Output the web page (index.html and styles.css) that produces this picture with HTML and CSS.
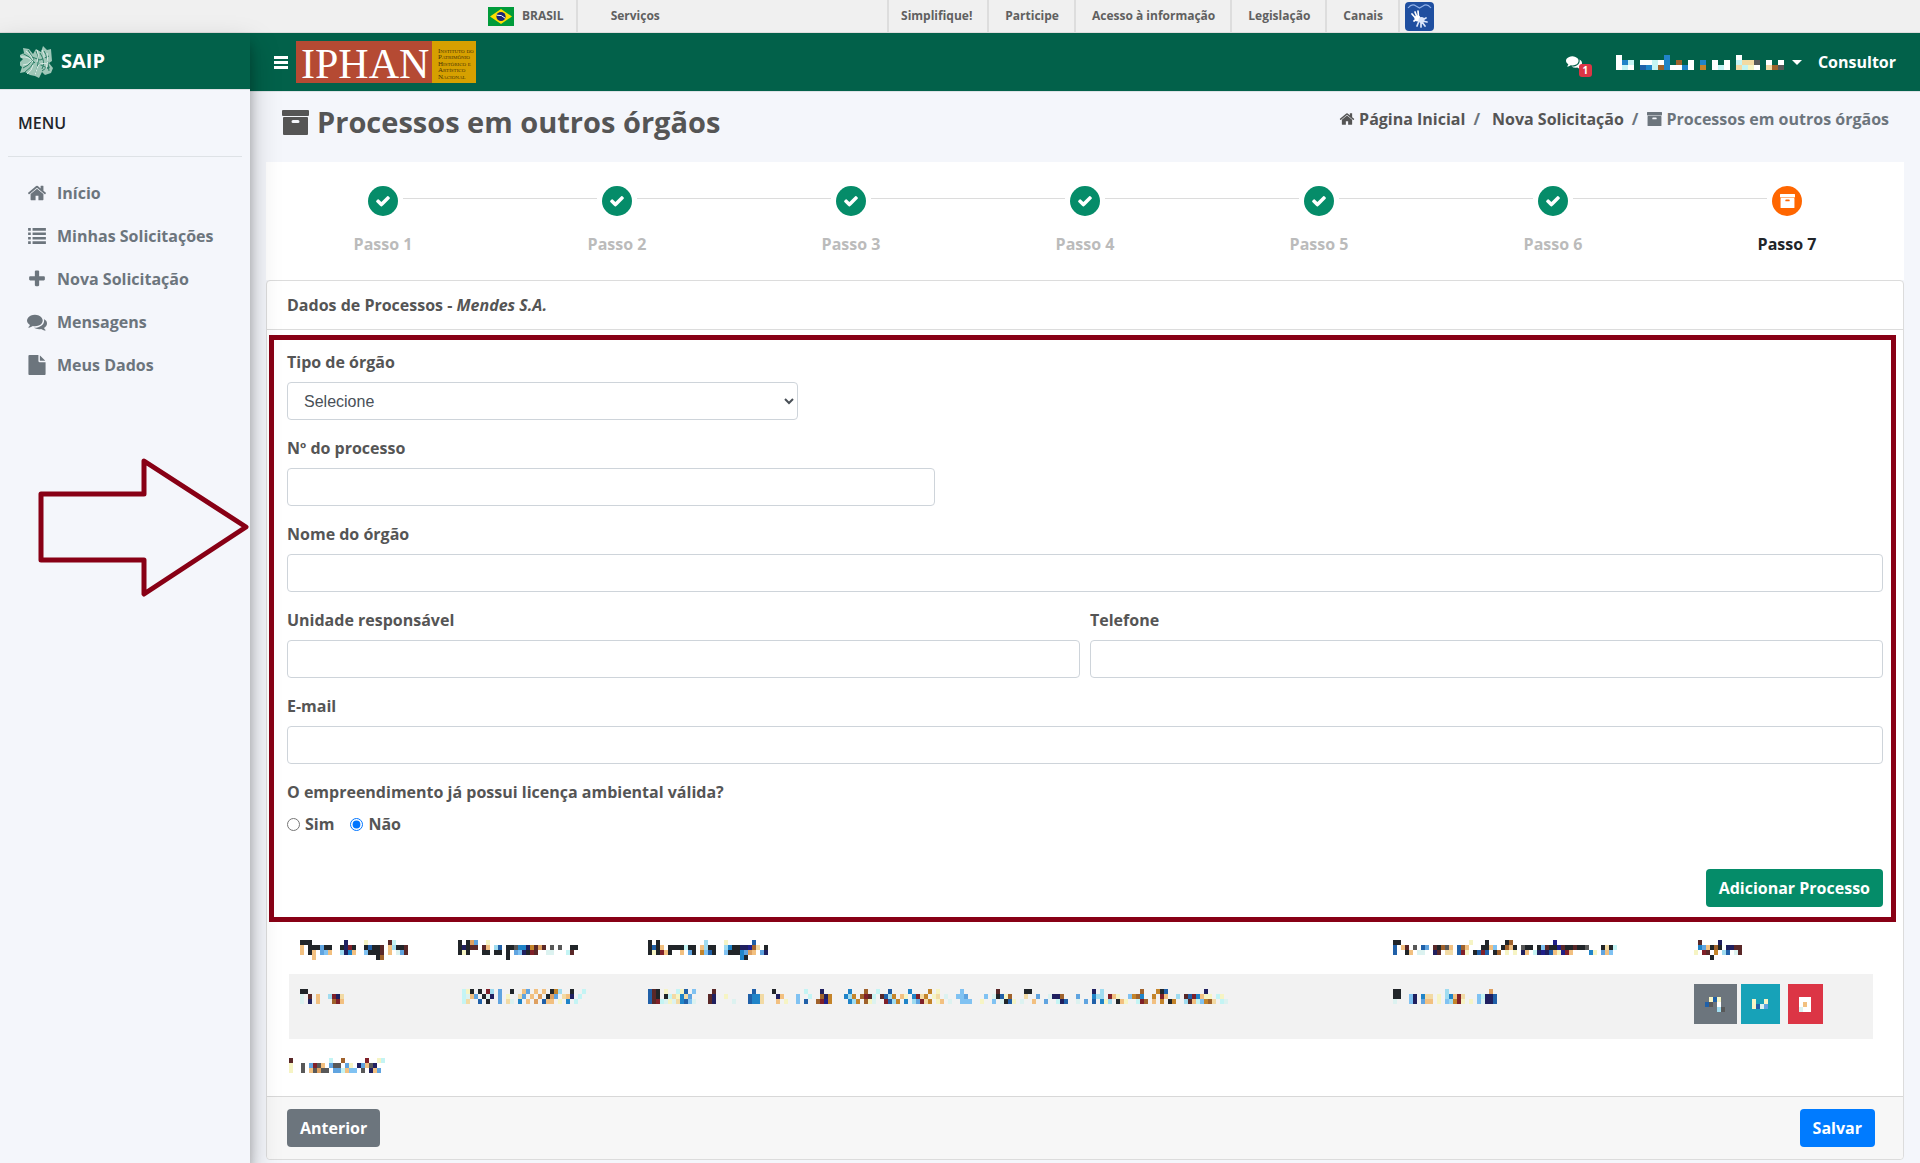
FILE: index.html
```html
<!DOCTYPE html>
<html lang="pt-BR">
<head>
<meta charset="utf-8">
<meta name="viewport" content="width=device-width, initial-scale=1">
<title>SAIP - Processos em outros órgãos</title>
<link rel="stylesheet" href="styles.css">
</head>
<body>
<svg class="sprite" aria-hidden="true">
  <symbol id="i-check" viewBox="0 0 1792 1792"><path d="M1671 566q0 40-28 68l-724 724-136 136q-28 28-68 28t-68-28l-136-136-362-362q-28-28-28-68t28-68l136-136q28-28 68-28t68 28l294 295 656-657q28-28 68-28t68 28l136 136q28 28 28 68z"/></symbol>
  <symbol id="i-home" viewBox="0 0 1792 1792"><path d="M1472 992v480q0 26-19 45t-45 19h-384v-384h-256v384h-384q-26 0-45-19t-19-45v-480q0-1 .5-3t.5-3l575-474 575 474q1 2 1 6zm223-69l-62 74q-8 9-21 11h-3q-13 0-21-7l-692-577-692 577q-12 8-24 7-13-2-21-11l-62-74q-8-10-7-23.500t11-21.500l719-599q32-26 76-26t76 26l244 204v-195q0-14 9-23t23-9h192q14 0 23 9t9 23v408l219 182q10 8 11 21.500t-7 23.500z"/></symbol>
  <symbol id="i-plus" viewBox="0 0 1792 1792"><path d="M1600 736v192q0 40-28 68t-68 28h-416v416q0 40-28 68t-68 28h-192q-40 0-68-28t-28-68v-416h-416q-40 0-68-28t-28-68v-192q0-40 28-68t68-28h416v-416q0-40 28-68t68-28h192q40 0 68 28t28 68v416h416q40 0 68 28t28 68z"/></symbol>
  <symbol id="i-comments" viewBox="0 0 1792 1792"><path d="M1408 768q0 139-94 257t-256.500 186.500-353.500 68.500q-86 0-176-16-124 88-278 128-36 9-86 16h-3q-11 0-20.500-8t-11.500-21q-1-3-1-6.500t.5-6.500 2-6l2.500-5 3.500-5.500 4-5 4.500-5 4-4.500q5-6 23-25t26-29.500 22.500-29 25-38.500 20.500-44q-124-72-195-177t-71-224q0-139 94-257t256.500-186.500 353.500-68.500 353.500 68.500 256.500 186.500 94 257zm384 256q0 120-71 224.500t-195 176.500q10 24 20.500 44t25 38.500 22.500 29 26 29.500 23 25q1 1 4 4.500t4.500 5 4 5 3.500 5.500l2.500 5 2 6 .5 6.500-1 6.500q-3 14-13 22t-22 7q-50-7-86-16-154-40-278-128-90 16-176 16-271 0-472-132 58 4 88 4 161 0 309-45t264-129q125-92 192-212t67-254q0-77-23-152 129 71 204 178t75 230z"/></symbol>
  <symbol id="i-file" viewBox="0 0 1792 1792"><path d="M1152 512v-472q22 14 36 28l408 408q14 14 28 36h-472zm-128 32q0 40 28 68t68 28h544v1056q0 40-28 68t-68 28h-1344q-40 0-68-28t-28-68v-1600q0-40 28-68t68-28h800v544z"/></symbol>
  <symbol id="i-list" viewBox="0 0 20 18"><path d="M0 0h3v3H0zM0 5h3v3H0zM0 10h3v3H0zM0 15h3v3H0zM5 0h15v3H5zM5 5h15v3H5zM5 10h15v3H5zM5 15h15v3H5z"/></symbol>
  <symbol id="i-archive" viewBox="0 0 27 25"><path fill-rule="evenodd" d="M1 0h25a1 1 0 0 1 1 1v4a1 1 0 0 1-1 1H1a1 1 0 0 1-1-1V1a1 1 0 0 1 1-1zM2 7h23a1 1 0 0 1 1 1v16a1 1 0 0 1-1 1H2a1 1 0 0 1-1-1V8a1 1 0 0 1 1-1zM11 10a1 1 0 0 0 0 3h5a1 1 0 0 0 0-3z"/></symbol>
  <symbol id="i-bars" viewBox="0 0 14 13"><path d="M0 0h14v3H0zM0 5h14v3H0zM0 10h14v3H0z"/></symbol>
</svg>

<div class="govbar">
  <div class="govbar-inner">
    <a class="gov-brand" href="#">
      <svg class="flag" viewBox="0 0 26 19" aria-hidden="true"><path fill="#009b3a" d="M0 0h26v19H0z"/><path fill="#fedf00" d="M13 2l11 7.500-11 7.500L2 9.500z"/><circle cx="13" cy="9.500" r="4.600" fill="#1c2575"/><path d="M8.700 8.200q5-.8 8.400 3" fill="none" stroke="#fff"/></svg>
      BRASIL
    </a>
    <a class="gov-services" href="#">Serviços</a>
    <nav class="gov-links">
      <a href="#">Simplifique!</a>
      <a href="#">Participe</a>
      <a href="#">Acesso à informação</a>
      <a href="#">Legislação</a>
      <a href="#">Canais</a>
    </nav>
    <a class="libras" href="#" aria-label="Libras">
      <svg viewBox="0 0 29 29" aria-hidden="true"><rect width="29" height="29" rx="4" fill="#1f4fa0"/><path d="M3 6q4-5 8-2M11 4l3.500 2L18 4M18 4q4-3 8 2" fill="none" stroke="#8fb0e8" stroke-width="1.200"/><path d="M10 10l2 5M7 12l3.500 4M13 9l.5 6M9 19l3-2" stroke="#fff" stroke-width="1.700" stroke-linecap="round"/><ellipse cx="12.500" cy="16.500" rx="3" ry="3" fill="#fff"/><path d="M17 18l4-2M17 19l5 1M17 20l3 4M16 20l0 5M14 19l-2 5" stroke="#dbe6fa" stroke-width="1.700" stroke-linecap="round"/><ellipse cx="16.500" cy="18" rx="3" ry="3" fill="#dbe6fa"/></svg>
    </a>
  </div>
</div>

<div class="app">
  <aside class="sidebar">
    <a class="brand" href="#">
      <svg class="brand-logo" viewBox="0 0 33 33" aria-hidden="true"><g fill="#9fc7b8"><path d="M3 3l6 1 4 5 3-5 5 3 2-6 4 4 4-1 1 12-3 2 4 5-2 5-6 2-3-3-3 6-4-2-5-1-5-3-5 1 2-6-4-3 5-5-5-3 6-3z"/></g><g fill="none" stroke="#2b7d65" stroke-width="1"><path d="M2 8q8 3 13 10M3 23q6-2 9-8M5 27q6-4 9-10M16 6q5 8-1 24M20 8q6 9 2 16M24 6q4 6 5 20M12 12l8 3M8 5l6 10M19 19l10 5M20 15l9-4M22 26q4-4 8-4"/></g><g fill="none" stroke="#dbece6" stroke-width="1"><path d="M1 12q8-1 12 5M3 20q5 0 8-4M7 29q5-3 6-9M17 5q3 5 0 12M22 5q3 4 2 9M18 21q3-4 9-2M15 30l3-9M27 8q2 9-1 16M6 6q5 3 7 9"/></g></svg>
      SAIP
    </a>
    <h2 class="menu-title">MENU</h2>
    <nav class="menu">
      <a href="#"><span class="menu-icon"><svg class="ic-20"><use href="#i-home"/></svg></span>Início</a>
      <a href="#"><span class="menu-icon"><svg class="ic-list"><use href="#i-list"/></svg></span>Minhas Solicitações</a>
      <a href="#"><span class="menu-icon"><svg class="ic-20"><use href="#i-plus"/></svg></span>Nova Solicitação</a>
      <a href="#"><span class="menu-icon"><svg class="ic-20"><use href="#i-comments"/></svg></span>Mensagens</a>
      <a href="#"><span class="menu-icon"><svg class="ic-20"><use href="#i-file"/></svg></span>Meus Dados</a>
    </nav>
    <svg class="arrow" viewBox="0 0 212 140" aria-hidden="true"><path d="M4 37h103V4l102 66-102 67v-34H4z"/></svg>
  </aside>

  <div class="content">
    <header class="navbar">
      <button class="toggle" type="button" aria-label="Alternar menu"><svg class="ic-bars"><use href="#i-bars"/></svg></button>
      <a href="#" class="iphan">
        <svg viewBox="0 0 180 42" role="img" aria-label="IPHAN">
          <path fill="#b54a33" d="M0 0h136v42H0z"/><path fill="#d6a000" d="M136 0h44v42h-44z"/>
          <text class="iphan-name" x="5" y="37">IPHAN</text>
          <g class="iphan-sub"><text x="142" y="12">Instituto do</text><text x="142" y="18">Patrimônio</text><text x="142" y="25">Histórico e</text><text x="142" y="31">Artístico</text><text x="142" y="38">Nacional</text></g>
        </svg>
      </a>
      <div class="nav-right">
        <a class="messages" href="#" aria-label="Mensagens"><svg class="ic-16"><use href="#i-comments"/></svg><span class="badge">1</span></a>
        <button class="user" type="button" aria-label="Usuário"><span class="mosaic" data-cell="6" data-grid="Q7U11Q/QUP1QQPQU1W1Q1U1Q1Q1PAAE1Q1Q/QPQ1BUPWUQQUQ1G1QPQ1APYQ1AWE"></span><span class="caret"></span></button>
        <a class="role" href="#">Consultor</a>
      </div>
    </header>

    <main>
      <div class="page-head">
        <h1><svg class="ic-title"><use href="#i-archive"/></svg>Processos em outros órgãos</h1>
        <nav class="crumbs" aria-label="Navegação">
          <a href="#"><svg class="ic-16"><use href="#i-home"/></svg>Página Inicial</a><span class="sep">/</span>
          <a href="#" class="second">Nova Solicitação</a><span class="sep">/</span>
          <span class="current"><svg class="ic-crumb"><use href="#i-archive"/></svg>Processos em outros órgãos</span>
        </nav>
      </div>

      <ol class="steps">
        <li><span class="dot"><svg class="ic-16"><use href="#i-check"/></svg></span>Passo 1</li>
        <li><span class="dot"><svg class="ic-16"><use href="#i-check"/></svg></span>Passo 2</li>
        <li><span class="dot"><svg class="ic-16"><use href="#i-check"/></svg></span>Passo 3</li>
        <li><span class="dot"><svg class="ic-16"><use href="#i-check"/></svg></span>Passo 4</li>
        <li><span class="dot"><svg class="ic-16"><use href="#i-check"/></svg></span>Passo 5</li>
        <li><span class="dot"><svg class="ic-16"><use href="#i-check"/></svg></span>Passo 6</li>
        <li class="active"><span class="dot"><svg class="ic-crumb"><use href="#i-archive"/></svg></span>Passo 7</li>
      </ol>

      <section class="card">
        <h3 class="card-head">Dados de Processos - <em>Mendes S.A.</em></h3>
        <form class="form">
          <div class="field w-select"><label for="tipo">Tipo de órgão</label><select id="tipo"><option>Selecione</option></select></div>
          <div class="field w-num"><label for="num">Nº do processo</label><input id="num" type="text"></div>
          <div class="field"><label for="nome">Nome do órgão</label><input id="nome" type="text"></div>
          <div class="row">
            <div class="field"><label for="unidade">Unidade responsável</label><input id="unidade" type="text"></div>
            <div class="field"><label for="tel">Telefone</label><input id="tel" type="tel"></div>
          </div>
          <div class="field"><label for="email">E-mail</label><input id="email" type="email"></div>
          <fieldset>
            <legend>O empreendimento já possui licença ambiental válida?</legend>
            <div class="radios">
              <label><input type="radio" name="lic">Sim</label>
              <label><input type="radio" name="lic" checked>Não</label>
            </div>
          </fieldset>
          <div class="form-actions"><button class="btn green" type="button">Adicionar Processo</button></div>
          <div class="highlight"></div>
        </form>

        <div class="table-wrap">
          <table>
            <thead><tr>
              <th><span class="mosaic" data-grid="KKK8N4Y5RP/O1KKKSKK2KNMK2KBKKR1OCKKR/O1KO1SLO2CNUO2LKKKR1O1TSR/3O15KW"></span></th>
              <th><span class="mosaic" data-grid="K1KDS2Y/KNKRR1RO1CB1KKEUUNGRDR1E1E2KK/KYK3KK1KK1K1SLNKMR2TT3PR/12K"></span></th>
              <th><span class="mosaic" data-grid="K1K11C4Y6B/KBKO1KKKKPKK1OCKK2CUKKNNVWA1K/KYKMOK2O1SK1GLBK2LKKKUSDO1SN/23UK"></span></th>
              <th><span class="mosaic" data-grid="KK17Y3K4KW10V/B1OR1E1BS1RKWEO1BWO3KKOL1KWOK1EKK1KLRKKVRKKRKKE3KAKP/B2KO1TT2NR1AA1BMY1KBMB1KW1Y1Y1NO1PNVNBOYVMO4UY1SOL"></span></th>
              <th><span class="mosaic" data-grid="1R4N/1USOKWK1NNRR/Y1MR1G1CB1TR/4K"></span></th>
            </tr></thead>
            <tbody><tr>
              <td><span class="mosaic" data-grid="KK/T1R1O2CMNA/T1N1O3WMO"></span></td>
              <td><span class="mosaic shift" data-grid="PYK1K1MC1S2K2OS1O1O1KGC2K2P/PTOS1KTN1S1Y2AS1O1D1KDS1AON1P/PA2B1K2S1AT1U1O1D1BOO1Y1U1P"></span></td>
              <td><span class="mosaic" data-grid="BRK1Y2PYB1L4R9B4K7P3N6U3W2P2B4U4G1Y5L8R6KK15N1C9W3GKB9N/BRK1KPAYUAS4RN2Y5BUUA3NO3L2P2WNG3UCG1WMRP1RBCG1OY1UMAG1YA1T2LLS4L1TKBYW3A2S2TNNW3S3UCC1MOY2LGWU2G1MO2C1RBMUOYY1PY/BRMPTYTAUBLT3RN4T3BUUA3O1Y2L1B2WMVG4UCG1WYT2MBCG1U1CSMAG1YO1T2LLL2Y2L1TKBY1T2O2S2PNB2T1S1B1UYC1KOY2PMW1O1G1KG2CROPLGWA1PT"></span></td>
              <td><span class="mosaic" data-grid="KK11C10D/KK2LN1UAA1Y1CUOMA3LPNNB/T3LN1SOO1Y1LCGMY1Y1LTNNB"></span></td>
              <td class="actions-cell"><div class="actions">
                <button class="act gray" type="button" aria-label="Editar"><span class="mosaic" data-grid="1YBY/BE1Q/3CE"></span></button>
                <button class="act teal" type="button" aria-label="Visualizar"><span class="mosaic" data-grid="Y2Y/YBTS"></span></button>
                <button class="act red" type="button" aria-label="Excluir"><span class="mosaic" data-grid="QQQ/QOQ/TQQ"></span></button>
              </div></td>
            </tr></tbody>
          </table>
          <p class="note"><span class="mosaic" data-grid="R9P2W5M2YP/Y2E1SMEO1SEE1SY1NSOEN/Y2E1OEDEE1SSPOLL1E1NOS"></span></p>
        </div>

        <footer class="card-foot">
          <button class="btn gray" type="button">Anterior</button>
          <button class="btn blue" type="button">Salvar</button>
        </footer>
      </section>
    </main>
  </div>
</div>
<script src="mosaic.js"></script>
</body>
</html>
```
FILE: styles.css
```css
*{box-sizing:border-box}
html,body{margin:0}
body{min-height:100vh;display:flex;flex-direction:column;background:#f4f6fb;color:#555;font:700 16px/24px "Open Sans","Noto Sans",sans-serif}
a{color:inherit;text-decoration:none}
button{font:inherit;border:0;padding:0;cursor:pointer}
svg{display:block;flex:none;fill:currentColor}
.sprite{position:absolute;width:0;height:0}
.ic-16{width:16px;height:16px}
.ic-20{width:20px;height:20px}
.ic-list{width:20px;height:16px}
.ic-bars{width:14px;height:13px}
.ic-title{width:27px;height:25px}
.ic-crumb{width:15px;height:14px}
.mosaic{display:block}

.govbar{height:33px;background:#f0f0f0;border-bottom:1px solid #ddd;color:#606060;font-size:12px;line-height:32px}
.govbar-inner{width:960px;max-width:100%;margin:0 auto;padding-left:8px;display:flex}
.gov-brand{display:flex;align-items:center;gap:8px;padding-right:12px;border-right:2px solid #ddd}
.flag{width:26px;height:19px}
.gov-services{flex:1;padding-left:33px}
.gov-links{display:flex;border-left:2px solid #ddd}
.gov-links a{padding:0 15px 0 16px;border-right:2px solid #ddd}
.gov-links a:first-child{padding-left:12px}
.libras{display:flex;align-items:center;width:40px;padding-left:5px}
.libras svg{width:29px;height:29px}

.app{flex:1;display:flex}
.sidebar{position:relative;z-index:2;width:250px;flex:none;background:#f4f6fb;box-shadow:0 14px 28px rgba(0,0,0,.25),0 10px 10px rgba(0,0,0,.22)}
.brand{display:flex;align-items:center;gap:8px;height:57px;padding-left:20px;background:#02614a;border-bottom:1px solid #dee2e6;color:#fff;font-size:20px}
.brand-logo{width:33px;height:33px}
.menu-title{margin:0 8px;padding:21px 10px;height:67px;border-bottom:1px solid #dee2e6;color:#212529;font-size:16px;line-height:24px;font-weight:600}
.menu{display:flex;flex-direction:column;padding:14px 8px;color:#6c757d}
.menu a{display:flex;align-items:center;height:43px;padding-left:16px}
.menu-icon{display:flex;justify-content:center;width:26px;margin-right:7px}
.arrow{position:absolute;left:37px;top:424px;width:212px;height:140px;fill:none;stroke:#880015;stroke-width:5;stroke-linejoin:round}

.content{flex:1;min-width:0;display:flex;flex-direction:column}
.navbar{display:flex;align-items:center;height:59px;padding:0 24px;background:#02614a;border-bottom:1px solid #dee2e6;color:#fff}
.toggle{background:none;color:#fff}
.iphan{margin-left:8px}
.iphan svg{width:180px;height:42px;overflow:visible}
.iphan-name{font:42px "Liberation Serif",serif;fill:#fff}
.iphan-sub text{font:small-caps 7px "Liberation Serif",serif;fill:#4a3408}
.nav-right{margin-left:auto;display:flex;align-items:center}
.messages{position:relative;display:flex;width:50px}
.badge{position:absolute;left:13px;top:10px;width:13px;height:13px;border-radius:3px;background:#dc3545;font-size:10px;line-height:13px;text-align:center}
.user{display:flex;align-items:center;background:none;margin-right:16px}
.caret{margin-left:8px;border:5px solid transparent;border-top-color:#fff;border-bottom:0}

main{flex:1;padding:0 16px 2px}
.page-head{display:flex;justify-content:space-between;align-items:flex-start;height:70px;padding:15px 15px 0 16px}
h1{display:flex;align-items:center;gap:8px;margin:0;font-size:29px;line-height:30px}
.crumbs{display:flex}
.crumbs a,.current{display:flex;align-items:center;gap:4px}
.crumbs .second{padding-left:3px}
.current{color:#6c757d}
.sep{padding:0 9px 0 8px;color:#6c757d}

.steps{display:grid;grid-template-columns:repeat(7,1fr);height:118px;margin:0;padding:24px 0 0;list-style:none;background:#fff;color:#bbb;text-align:center}
.steps li{position:relative}
.steps li+li::before{content:"";position:absolute;top:12px;right:calc(50% + 20px);width:calc(100% - 40px);height:1px;background:#dcdcdc}
.dot{display:flex;align-items:center;justify-content:center;width:30px;height:30px;margin:0 auto 16px;border-radius:50%;background:#058c69;color:#fff}
.active{color:#212529}
.active .dot{background:#ff6600}

.card{border:1px solid #dcdcdc;border-radius:4px;background:#fff}
.card-head{margin:0;padding:12px 20px;border-bottom:1px solid #dcdcdc;font-size:16px;line-height:24px}
.form{position:relative;padding:20px 20px 16px}
.highlight{position:absolute;inset:5px 7px 1px 2px;border:5px solid #880015;pointer-events:none}
.field{flex:1;margin-bottom:16px}
.field label{display:block;margin-bottom:8px}
.field input,.field select{display:block;width:100%;height:38px;border:1px solid #ced4da;border-radius:4px;background:#fff;color:#495057;font:400 16px/24px "Liberation Sans",Arial,sans-serif;padding:6px 12px}
.w-select{width:32%}
.w-num{width:calc(41% - 6px)}
.row{display:flex;gap:10px}
fieldset{margin:0;padding:0;border:0}
legend{padding:0}
.radios{display:flex;gap:16px;padding-top:8px}
.radios label{display:flex;align-items:center;gap:5px}
.radios input{width:13px;height:13px;margin:0}
.form-actions{display:flex;justify-content:flex-end;margin-top:33px}
.btn{height:38px;padding:0 13px;border-radius:4px;color:#fff}
.green{background:#058c69}
.gray{background:#6c757d}
.blue{background:#007bff}
.teal{background:#17a2b8}
.red{background:#dc3545}

.table-wrap{padding:0 30px 23px 22px}
table{width:100%;table-layout:fixed;border-collapse:collapse}
th,td{padding:15px 0 0 11px;text-align:left;vertical-align:top}
th{height:51px;padding-top:17px;width:12%}
th:first-child{width:10%}
th:nth-child(3){width:47%}
th:nth-child(4){width:19%}
td{height:65px;background:#f2f2f2}
.shift{padding-left:4px}
.actions-cell{padding-top:10px}
.actions{display:flex}
.act{display:flex;justify-content:center;align-items:center;width:43px;height:40px;margin-right:4px}
.act.teal{width:39px;margin-right:8px}
.act.red{width:35px}
.note{margin:19px 0 0}
.card-foot{display:flex;justify-content:space-between;padding:12px 28px 12px 20px;border-top:1px solid #d8d8d8;border-radius:0 0 4px 4px;background:#f7f7f7}
```
FILE: mosaic.js
```js
// Draws the obscured texts as grids of coloured cells.
// A letter paints one cell, a number skips that many cells, "/" starts a new line.
const COLORS = {
  K: '#212529', N: '#20205f', B: '#2060a8', S: '#60a4e0', L: '#80c2f2', C: '#a0dcf0',
  P: '#c4f4f4', O: '#f2c080', D: '#dea060', G: '#c4842a', R: '#5a2828', M: '#802028',
  W: '#a0622c', Y: '#f6f4c4', T: '#dcf2f0', U: '#2084c8', A: '#f2daa4', V: '#202088',
  Q: '#ffffff', E: '#585858'
};
for (const el of document.querySelectorAll('.mosaic')) {
  const cell = Number(el.dataset.cell || 4);
  const rows = el.dataset.grid.split('/');
  let rects = '';
  let width = 0;
  rows.forEach((row, y) => {
    let x = 0;
    for (const part of row.match(/\d+|[A-Z]/g) || []) {
      if (COLORS[part]) {
        rects += `<rect x="${x * cell}" y="${y * 5}" width="${cell}" height="5" fill="${COLORS[part]}"/>`;
        x += 1;
      } else {
        x += Number(part);
      }
    }
    width = Math.max(width, x);
  });
  el.innerHTML = `<svg width="${width * cell}" height="${rows.length * 5}" shape-rendering="crispEdges" aria-hidden="true">${rects}</svg>`;
}
```
